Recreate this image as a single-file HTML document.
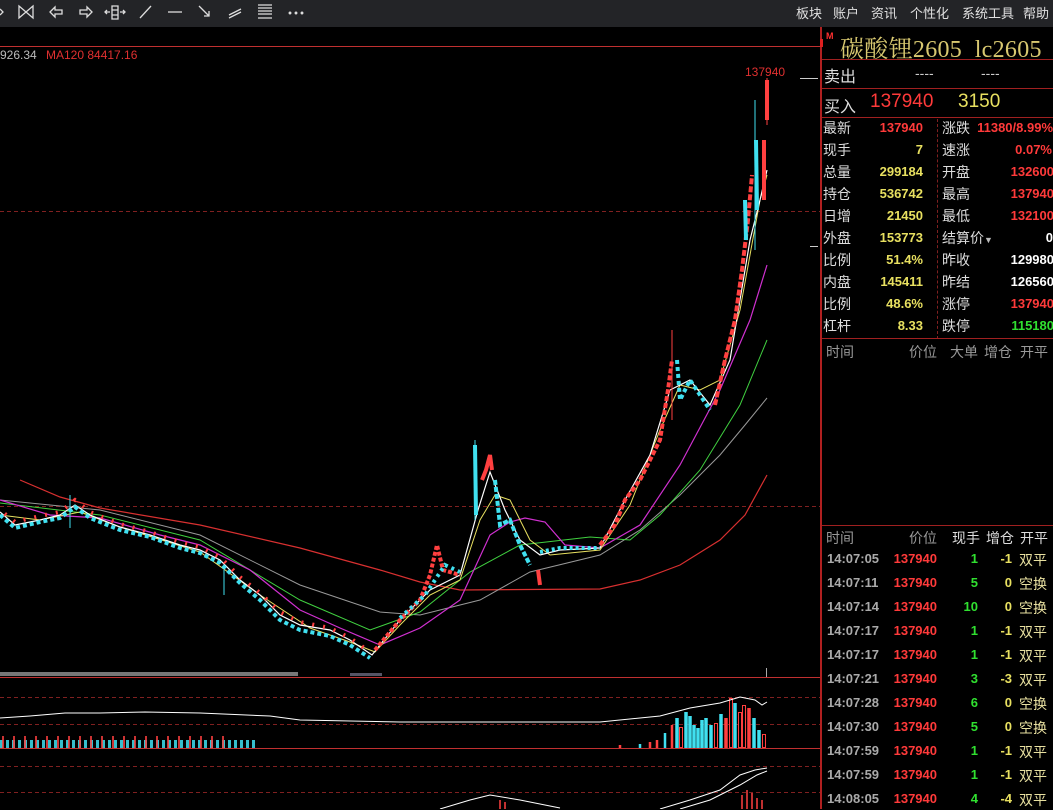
<!DOCTYPE html>
<html><head><meta charset="utf-8">
<style>
*{margin:0;padding:0;box-sizing:border-box}
body{width:1053px;height:809px;background:#000;overflow:hidden;position:relative;font-family:"Liberation Sans","Noto Sans CJK SC",sans-serif;color:#ddd}
#tb{position:absolute;left:0;top:0;width:1053px;height:27px;background:#232427}
#tb .m{position:absolute;top:3px;font-size:13px;color:#e0e0e0}
#rp{position:absolute;left:820px;top:27px;width:233px;height:782px;border-left:2px solid #b02020;background:#000}
.hl{position:absolute;left:0;width:233px;height:1px;background:#a02020}
.t{position:absolute;white-space:nowrap;font-size:14px}
.lb{color:#ddd}
.r{color:#ff3a3a;font-weight:bold;font-size:13px;text-align:right}
.y{color:#e8e060;font-weight:bold;font-size:13px;text-align:right}
.w{color:#fff;font-weight:bold;font-size:13px;text-align:right}
.g{color:#30e030;font-weight:bold;font-size:13px;text-align:right}
.gr{color:#aaa;font-weight:bold;font-size:13px}
</style></head><body>
<div id="tb">
<svg width="320" height="27" style="position:absolute;left:0;top:0" stroke="#ddd" fill="none" stroke-width="1.3">
<path d="M0 9 L3 12 L0 15"/>
<path d="M19 6 L26 12 L19 18 Z M33 6 L26 12 L33 18 Z"/>
<path d="M50 12 L55 7 L55 10 L62 10 L62 14 L55 14 L55 17 Z"/>
<path d="M92 12 L87 7 L87 10 L80 10 L80 14 L87 14 L87 17 Z"/>
<path d="M105 12 L110 12 M107 10 L105 12 L107 14 M112 6 L118 6 L118 19 L112 19 Z M112 10 L118 10 M112 15 L118 15 M120 12 L125 12 M123 10 L125 12 L123 14"/>
<path d="M140 18 L151 6"/>
<path d="M168 12 L182 12"/>
<path d="M199 6 L209 16 M204 16 L209 16 L209 11"/>
<path d="M229 15 L241 9 M229 18 L241 12"/>
<path d="M258 5 L272 5 M258 8 L272 8 M258 11 L272 11 M258 14 L272 14 M258 18 L272 18"/>
<circle cx="290" cy="13" r="0.8" fill="#ddd"/><circle cx="296" cy="13" r="0.8" fill="#ddd"/><circle cx="302" cy="13" r="0.8" fill="#ddd"/>
</svg>
<span class="m" style="left:796px">板块</span>
<span class="m" style="left:833px">账户</span>
<span class="m" style="left:871px">资讯</span>
<span class="m" style="left:910px">个性化</span>
<span class="m" style="left:962px">系统工具</span>
<span class="m" style="left:1023px">帮助</span>
</div>

<svg width="820" height="782" style="position:absolute;left:0;top:27px" viewBox="0 27 820 782">
<line x1="0" y1="46.5" x2="820" y2="46.5" stroke="#c03030"/>
<line x1="0" y1="211.5" x2="820" y2="211.5" stroke="#802020" stroke-dasharray="4,3"/>
<line x1="0" y1="506.5" x2="820" y2="506.5" stroke="#802020" stroke-dasharray="4,3"/>
<line x1="800" y1="78.5" x2="818" y2="78.5" stroke="#ccc"/>
<line x1="810" y1="246.5" x2="818" y2="246.5" stroke="#ccc"/>
<text x="0" y="59" font-size="12" fill="#bbb" font-family="Liberation Sans">926.34</text>
<text x="46" y="59" font-size="12" fill="#e03030" font-family="Liberation Sans">MA120 84417.16</text>
<text x="745" y="76" font-size="12" fill="#e03030" font-family="Liberation Sans">137940</text>
<!-- MAs -->
<polyline fill="none" stroke="#d83030" stroke-width="1.2" points="20,480 60,497 100,508 200,525 300,548 380,570 420,582 460,590 600,589 640,580 680,565 720,540 745,515 767,475"/>
<polyline fill="none" stroke="#999" stroke-width="1" points="0,500 100,510 200,535 300,585 380,612 420,615 480,600 530,572 600,555 640,530 680,495 720,455 745,425 767,398"/>
<polyline fill="none" stroke="#40d040" stroke-width="1" points="0,503 100,515 200,540 300,600 370,630 420,612 470,572 520,545 590,537 630,540 660,515 700,470 740,405 767,340"/>
<polyline fill="none" stroke="#d030d0" stroke-width="1.2" points="0,500 50,515 100,518 160,535 200,545 250,570 300,610 340,628 380,645 420,628 460,600 490,535 510,522 525,518 545,522 565,545 600,548 640,525 680,465 720,390 750,320 767,265"/>
<polyline fill="none" stroke="#e8e060" stroke-width="1" points="0,515 40,520 80,512 120,527 200,552 260,595 310,628 350,642 375,652 400,625 430,595 460,580 480,520 495,495 510,500 530,540 550,555 600,550 630,505 660,430 680,385 700,390 720,380 740,310 760,200 767,175"/>
<polyline fill="none" stroke="#fff" stroke-width="1.2" points="0,512 15,525 40,520 60,515 75,505 90,515 120,527 150,535 180,545 200,550 220,560 240,580 260,595 280,615 300,625 330,630 350,640 372,655 400,620 430,590 460,575 478,510 490,472 505,510 520,540 540,555 560,550 600,548 625,500 650,455 670,390 690,380 710,405 730,360 750,240 760,200 767,170"/>
<!-- candles -->
<g stroke-width="4">
<polyline fill="none" stroke="#40e0f0" stroke-dasharray="4,3" points="0,515 15,528 40,522 60,518 75,507 90,518 120,530 150,537 180,548 200,553 220,563 240,583 260,600 280,620 300,630 330,636 350,645 370,658"/>
<polyline fill="none" stroke="#ff4040" stroke-dasharray="2,9" stroke-dashoffset="5" points="0,510 15,522 40,516 60,512 75,500 90,512 120,524 150,532 180,542 200,547 220,557 240,577 260,593 280,612 300,622 330,628 350,638 370,652"/>
<polyline fill="none" stroke="#ff4040" stroke-dasharray="4,2" points="375,650 400,620 420,600 430,575 437,545 443,570 460,575"/>
<polyline fill="none" stroke="#40e0f0" stroke-dasharray="3,4" points="400,618 425,595 445,565 460,572"/>
<polyline fill="none" stroke="#40e0f0" points="475,445 476,515"/>
<polyline fill="none" stroke="#ff4040" points="482,480 486,470 490,455 492,470"/>
<polyline fill="none" stroke="#40e0f0" stroke-dasharray="5,2" points="495,480 500,525 510,520 520,545 530,565"/>
<polyline fill="none" stroke="#ff4040" points="538,570 540,585"/>
<polyline fill="none" stroke="#40e0f0" stroke-dasharray="3,3" points="540,552 560,548 600,548"/>
<polyline fill="none" stroke="#ff4040" stroke-dasharray="5,2" points="600,545 615,525 625,500 640,480 650,460 660,440 668,390 672,360"/>
<polyline fill="none" stroke="#40e0f0" stroke-dasharray="4,3" points="677,360 680,400 690,380 700,395 710,410"/>
<polyline fill="none" stroke="#ff4040" stroke-dasharray="6,2" points="715,405 725,360 735,320 742,270 748,220 752,175"/>
<polyline fill="none" stroke="#40e0f0" points="745,200 746,240"/>
<polyline fill="none" stroke="#40e0f0" points="756,140 757,210"/>
<polyline fill="none" stroke="#ff4040" points="764,140 764,200"/>
<polyline fill="none" stroke="#ff4040" points="767,80 767,120"/>
</g>
<g stroke-width="1" fill="none">
<line x1="755" y1="100" x2="755" y2="250" stroke="#40e0f0"/>
<line x1="767" y1="78" x2="767" y2="125" stroke="#ff4040"/>
<line x1="475" y1="440" x2="475" y2="520" stroke="#40e0f0"/>
<line x1="672" y1="330" x2="672" y2="420" stroke="#ff4040"/>
<line x1="70" y1="495" x2="70" y2="528" stroke="#40e0f0"/>
<line x1="224" y1="570" x2="224" y2="595" stroke="#40e0f0"/>
</g>
<!-- bottom axis -->
<line x1="0" y1="677.5" x2="820" y2="677.5" stroke="#c03030"/>
<rect x="0" y="672" width="298" height="4" fill="#777"/>
<rect x="350" y="673" width="32" height="3" fill="#556"/>
<line x1="766.5" y1="668" x2="766.5" y2="677" stroke="#aaa"/>
<!-- volume -->
<line x1="0" y1="697.5" x2="820" y2="697.5" stroke="#802020" stroke-dasharray="4,3"/>
<line x1="0" y1="724.5" x2="820" y2="724.5" stroke="#802020" stroke-dasharray="4,3"/>
<line x1="0" y1="748.5" x2="820" y2="748.5" stroke="#c03030"/>
<line x1="0" y1="766.5" x2="820" y2="766.5" stroke="#802020" stroke-dasharray="4,3"/>
<line x1="0" y1="792.5" x2="820" y2="792.5" stroke="#802020" stroke-dasharray="4,3"/>
<line x1="0" y1="744" x2="255" y2="744" stroke="#40e0f0" stroke-dasharray="3,3" stroke-width="8" opacity="0.85"/>
<line x1="2" y1="742" x2="230" y2="742" stroke="#ff4040" stroke-dasharray="2,9" stroke-width="12" opacity="0.8"/>
<g stroke-width="2.5">
<line x1="620" y1="748" x2="620" y2="745" stroke="#ff4040"/>
<line x1="640" y1="748" x2="640" y2="744" stroke="#40e0f0"/>
<line x1="650" y1="748" x2="650" y2="742" stroke="#ff4040"/>
<line x1="657" y1="748" x2="657" y2="740" stroke="#ff4040"/>
<line x1="665" y1="748" x2="665" y2="733" stroke="#40e0f0"/>
<line x1="672" y1="748" x2="672" y2="725" stroke="#ff4040"/>
</g>
<g stroke-width="3.5">
<line x1="677" y1="748" x2="677" y2="718" stroke="#40e0f0"/>
<line x1="681" y1="748" x2="681" y2="727" stroke="#ff4040"/>
<line x1="686" y1="748" x2="686" y2="712" stroke="#40e0f0"/>
<line x1="690" y1="748" x2="690" y2="716" stroke="#40e0f0"/>
<line x1="694" y1="748" x2="694" y2="725" stroke="#40e0f0"/>
<line x1="698" y1="748" x2="698" y2="728" stroke="#40e0f0"/>
<line x1="702" y1="748" x2="702" y2="720" stroke="#40e0f0"/>
<line x1="706" y1="748" x2="706" y2="718" stroke="#40e0f0"/>
<line x1="711" y1="748" x2="711" y2="725" stroke="#40e0f0"/>
<line x1="716" y1="748" x2="716" y2="723" stroke="#ff4040"/>
<line x1="721" y1="748" x2="721" y2="714" stroke="#40e0f0"/>
<line x1="726" y1="748" x2="726" y2="718" stroke="#ff4040"/>
<line x1="731" y1="748" x2="731" y2="698" stroke="#ff4040"/>
<line x1="735" y1="748" x2="735" y2="703" stroke="#40e0f0"/>
<line x1="740" y1="748" x2="740" y2="712" stroke="#ff4040"/>
<line x1="744" y1="748" x2="744" y2="705" stroke="#ff4040"/>
<line x1="749" y1="748" x2="749" y2="708" stroke="#ff4040"/>
<line x1="754" y1="748" x2="754" y2="718" stroke="#40e0f0"/>
<line x1="759" y1="748" x2="759" y2="730" stroke="#40e0f0"/>
<line x1="764" y1="748" x2="764" y2="734" stroke="#ff4040"/>
</g>
<g stroke-width="1" fill="#000" stroke="#ff4040">
<rect x="679.5" y="727.5" width="3" height="20"/><rect x="714.5" y="723.5" width="3" height="24"/><rect x="729.5" y="698.5" width="3" height="49"/><rect x="738.5" y="712.5" width="3" height="35"/><rect x="742.5" y="705.5" width="3" height="42"/><rect x="762.5" y="734.5" width="3" height="13"/>
</g>
<polyline fill="none" stroke="#fff" stroke-width="1" points="0,718 30,716 65,713 100,713 145,712 200,713 270,716 300,720 400,722 500,722 600,722 660,716 690,708 720,703 740,697 755,700 762,705 767,702"/>
<!-- macd -->
<polyline fill="none" stroke="#fff" stroke-width="1" points="440,809 470,800 490,795 520,800 560,808"/>
<polyline fill="none" stroke="#fff" stroke-width="1" points="660,809 690,800 720,790 740,775 755,770 767,768"/>
<polyline fill="none" stroke="#fff" stroke-width="1" points="680,809 710,800 740,785 757,775 767,771"/>
<g stroke="#ff4040" stroke-width="1.5">
<line x1="742" y1="809" x2="742" y2="795"/><line x1="747" y1="809" x2="747" y2="790"/><line x1="752" y1="809" x2="752" y2="793"/><line x1="757" y1="809" x2="757" y2="798"/><line x1="762" y1="809" x2="762" y2="800"/>
<line x1="500" y1="809" x2="500" y2="800"/><line x1="505" y1="809" x2="505" y2="802"/>
</g>
</svg>

<div id="rp">
<div style="position:absolute;left:-2px;top:12px;width:3px;height:8px;background:#e02020"></div>
<div style="position:absolute;left:4px;top:4px;font-size:9px;color:#ff3030;font-weight:bold">M</div>
<div class="t" style="left:18px;top:2px;font-size:24px;letter-spacing:0.3px;color:#d8c870;font-family:'Liberation Serif','Noto Serif CJK SC',serif">碳酸锂2605&nbsp;&nbsp;lc2605</div>
<div class="hl" style="top:32px"></div>
<div class="t lb" style="left:2px;top:36px;font-size:16px">卖出</div>
<div class="t" style="left:93px;top:38px;color:#ccc">----</div>
<div class="t" style="left:159px;top:38px;color:#ccc">----</div>
<div class="hl" style="top:61px"></div>
<div class="t lb" style="left:2px;top:66px;font-size:16px">买入</div>
<div class="t" style="left:48px;top:64px;font-size:19px;color:#ff3a3a">137940</div>
<div class="t" style="left:136px;top:64px;font-size:19px;color:#e8e060">3150</div>
<div class="hl" style="top:90px"></div>
<div style="position:absolute;left:115px;top:92px;height:220px;border-left:1px dashed #802020"></div>
<div class="hl" style="top:311px"></div>
<div class="t" style="left:4px;top:315px;color:#999">时间</div>
<div class="t" style="left:87px;top:315px;color:#999">价位</div>
<div class="t" style="left:128px;top:315px;color:#999">大单</div>
<div class="t" style="left:162px;top:315px;color:#999">增仓</div>
<div class="t" style="left:198px;top:315px;color:#999">开平</div>
<div class="hl" style="top:498px"></div>
<div class="t" style="left:4px;top:501px;color:#999">时间</div>
<div class="t" style="left:87px;top:501px;color:#999">价位</div>
<div class="t" style="left:130px;top:501px;color:#ddd">现手</div>
<div class="t" style="left:164px;top:501px;color:#ddd">增仓</div>
<div class="t" style="left:198px;top:501px;color:#ddd">开平</div>
</div>

<div style="position:absolute;left:820px;top:0;width:233px">
<div class="t lb" style="left:3px;top:118px">最新</div><div class="t r" style="left:40px;top:120px;width:63px">137940</div>
<div class="t lb" style="left:122px;top:118px">涨跌</div><div class="t r" style="left:150px;top:120px;width:83px">11380/8.99%</div>
<div class="t lb" style="left:3px;top:140px">现手</div><div class="t y" style="left:40px;top:142px;width:63px">7</div>
<div class="t lb" style="left:122px;top:140px">速涨</div><div class="t r" style="left:150px;top:142px;width:82px">0.07%</div>
<div class="t lb" style="left:3px;top:162px">总量</div><div class="t y" style="left:40px;top:164px;width:63px">299184</div>
<div class="t lb" style="left:122px;top:162px">开盘</div><div class="t r" style="left:150px;top:164px;width:84px">132600</div>
<div class="t lb" style="left:3px;top:184px">持仓</div><div class="t y" style="left:40px;top:186px;width:63px">536742</div>
<div class="t lb" style="left:122px;top:184px">最高</div><div class="t r" style="left:150px;top:186px;width:84px">137940</div>
<div class="t lb" style="left:3px;top:206px">日增</div><div class="t y" style="left:40px;top:208px;width:63px">21450</div>
<div class="t lb" style="left:122px;top:206px">最低</div><div class="t r" style="left:150px;top:208px;width:84px">132100</div>
<div class="t lb" style="left:3px;top:228px">外盘</div><div class="t y" style="left:40px;top:230px;width:63px">153773</div>
<div class="t lb" style="left:122px;top:228px">结算价<span style="font-size:9px;color:#bbb">▼</span></div><div class="t w" style="left:150px;top:230px;width:83px">0</div>
<div class="t lb" style="left:3px;top:250px">比例</div><div class="t y" style="left:40px;top:252px;width:63px">51.4%</div>
<div class="t lb" style="left:122px;top:250px">昨收</div><div class="t w" style="left:150px;top:252px;width:84px">129980</div>
<div class="t lb" style="left:3px;top:272px">内盘</div><div class="t y" style="left:40px;top:274px;width:63px">145411</div>
<div class="t lb" style="left:122px;top:272px">昨结</div><div class="t w" style="left:150px;top:274px;width:84px">126560</div>
<div class="t lb" style="left:3px;top:294px">比例</div><div class="t y" style="left:40px;top:296px;width:63px">48.6%</div>
<div class="t lb" style="left:122px;top:294px">涨停</div><div class="t r" style="left:150px;top:296px;width:84px">137940</div>
<div class="t lb" style="left:3px;top:316px">杠杆</div><div class="t y" style="left:40px;top:318px;width:63px">8.33</div>
<div class="t lb" style="left:122px;top:316px">跌停</div><div class="t g" style="left:150px;top:318px;width:84px">115180</div>
</div>

<div style="position:absolute;left:820px;top:0;width:233px">
<div class="t gr" style="left:7px;top:551px">14:07:05</div><div class="t r" style="left:70px;top:551px;width:47px">137940</div><div class="t g" style="left:140px;top:551px;width:18px">1</div><div class="t y" style="left:170px;top:551px;width:22px">-1</div><div class="t" style="left:199px;top:550px;color:#e8e0a0">双平</div>
<div class="t gr" style="left:7px;top:575px">14:07:11</div><div class="t r" style="left:70px;top:575px;width:47px">137940</div><div class="t g" style="left:140px;top:575px;width:18px">5</div><div class="t y" style="left:170px;top:575px;width:22px">0</div><div class="t" style="left:199px;top:574px;color:#e8e0a0">空换</div>
<div class="t gr" style="left:7px;top:599px">14:07:14</div><div class="t r" style="left:70px;top:599px;width:47px">137940</div><div class="t g" style="left:140px;top:599px;width:18px">10</div><div class="t y" style="left:170px;top:599px;width:22px">0</div><div class="t" style="left:199px;top:598px;color:#e8e0a0">空换</div>
<div class="t gr" style="left:7px;top:623px">14:07:17</div><div class="t r" style="left:70px;top:623px;width:47px">137940</div><div class="t g" style="left:140px;top:623px;width:18px">1</div><div class="t y" style="left:170px;top:623px;width:22px">-1</div><div class="t" style="left:199px;top:622px;color:#e8e0a0">双平</div>
<div class="t gr" style="left:7px;top:647px">14:07:17</div><div class="t r" style="left:70px;top:647px;width:47px">137940</div><div class="t g" style="left:140px;top:647px;width:18px">1</div><div class="t y" style="left:170px;top:647px;width:22px">-1</div><div class="t" style="left:199px;top:646px;color:#e8e0a0">双平</div>
<div class="t gr" style="left:7px;top:671px">14:07:21</div><div class="t r" style="left:70px;top:671px;width:47px">137940</div><div class="t g" style="left:140px;top:671px;width:18px">3</div><div class="t y" style="left:170px;top:671px;width:22px">-3</div><div class="t" style="left:199px;top:670px;color:#e8e0a0">双平</div>
<div class="t gr" style="left:7px;top:695px">14:07:28</div><div class="t r" style="left:70px;top:695px;width:47px">137940</div><div class="t g" style="left:140px;top:695px;width:18px">6</div><div class="t y" style="left:170px;top:695px;width:22px">0</div><div class="t" style="left:199px;top:694px;color:#e8e0a0">空换</div>
<div class="t gr" style="left:7px;top:719px">14:07:30</div><div class="t r" style="left:70px;top:719px;width:47px">137940</div><div class="t g" style="left:140px;top:719px;width:18px">5</div><div class="t y" style="left:170px;top:719px;width:22px">0</div><div class="t" style="left:199px;top:718px;color:#e8e0a0">空换</div>
<div class="t gr" style="left:7px;top:743px">14:07:59</div><div class="t r" style="left:70px;top:743px;width:47px">137940</div><div class="t g" style="left:140px;top:743px;width:18px">1</div><div class="t y" style="left:170px;top:743px;width:22px">-1</div><div class="t" style="left:199px;top:742px;color:#e8e0a0">双平</div>
<div class="t gr" style="left:7px;top:767px">14:07:59</div><div class="t r" style="left:70px;top:767px;width:47px">137940</div><div class="t g" style="left:140px;top:767px;width:18px">1</div><div class="t y" style="left:170px;top:767px;width:22px">-1</div><div class="t" style="left:199px;top:766px;color:#e8e0a0">双平</div>
<div class="t gr" style="left:7px;top:791px">14:08:05</div><div class="t r" style="left:70px;top:791px;width:47px">137940</div><div class="t g" style="left:140px;top:791px;width:18px">4</div><div class="t y" style="left:170px;top:791px;width:22px">-4</div><div class="t" style="left:199px;top:790px;color:#e8e0a0">双平</div>
</div>
</body></html>
